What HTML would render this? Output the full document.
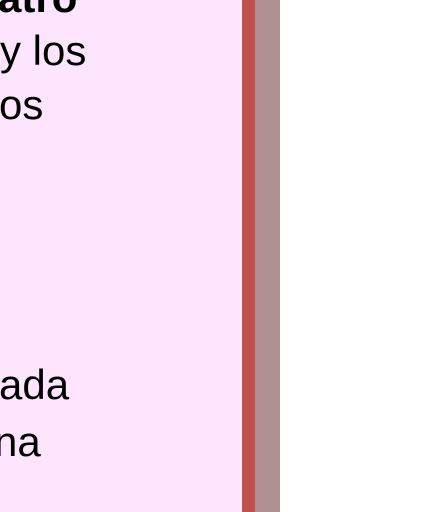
<!DOCTYPE html>
<html><head><meta charset="utf-8"><style>
html,body{margin:0;padding:0;width:433px;height:512px;overflow:hidden;background:#fff;}
.pink{position:absolute;left:0;top:0;width:242px;height:512px;background:#fde6fd;}
.red{position:absolute;left:242px;top:0;width:13px;height:512px;background:#c0504d;}
.mauve{position:absolute;left:255px;top:0;width:25px;height:512px;background:#b09090;}
.t{position:absolute;font-family:"Liberation Sans",sans-serif;font-size:42px;color:#000;line-height:1;white-space:nowrap;}
</style></head><body>
<div class="pink"></div><div class="red"></div><div class="mauve"></div>
<div class="t" style="left:-2px;top:-23px;font-weight:bold">atro</div>
<div class="t" style="left:0px;top:30px">y los</div>
<div class="t" style="left:-1px;top:84px">os</div>
<div class="t" style="left:-1px;top:364px">ada</div>
<div class="t" style="left:-6px;top:421px">na</div>
</body></html>
